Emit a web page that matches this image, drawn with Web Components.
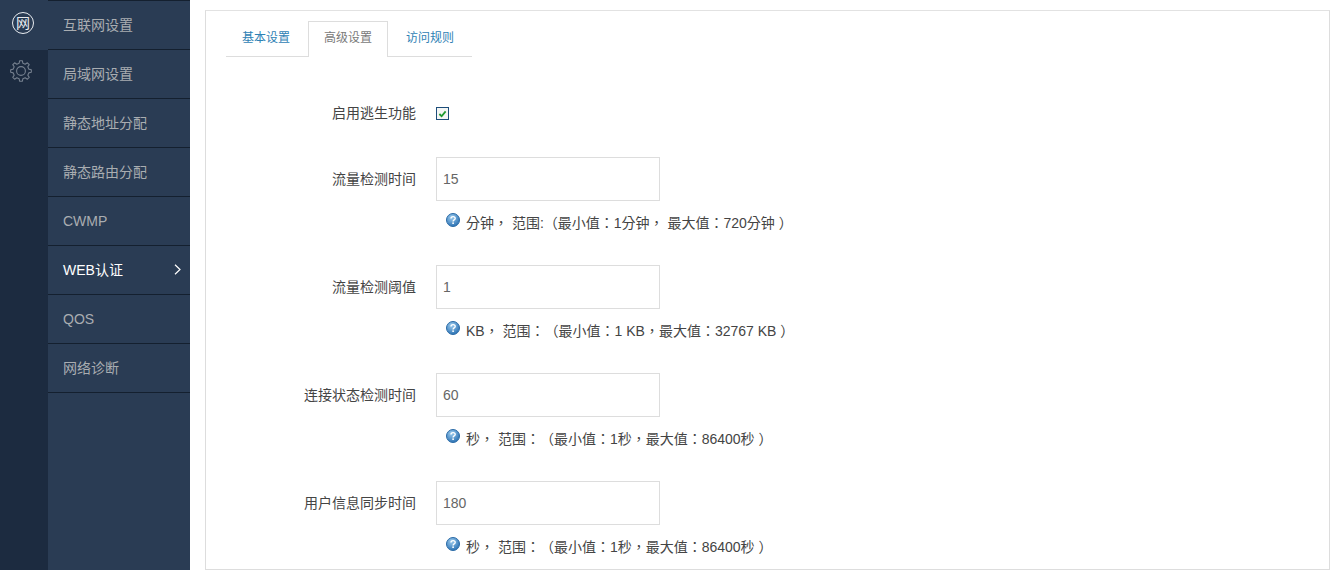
<!DOCTYPE html>
<html>
<head>
<meta charset="utf-8">
<title>高级设置</title>
<style>
  html, body { margin: 0; height: 100%; overflow: hidden; background: #fff; }
  body { font: 14px "Liberation Sans", "Noto Sans CJK SC", sans-serif; color: #444; text-spacing-trim: space-all; }
</style>
</head>
<body>
<app-shell>
  <icon-rail slot="rail"></icon-rail>
  <side-menu slot="menu">
    <menu-item>互联网设置</menu-item>
    <menu-item>局域网设置</menu-item>
    <menu-item>静态地址分配</menu-item>
    <menu-item>静态路由分配</menu-item>
    <menu-item latin>CWMP</menu-item>
    <menu-item active>WEB认证</menu-item>
    <menu-item latin>QOS</menu-item>
    <menu-item>网络诊断</menu-item>
  </side-menu>
  <settings-panel>
    <tab-bar>
      <tab-item>基本设置</tab-item>
      <tab-item active>高级设置</tab-item>
      <tab-item>访问规则</tab-item>
    </tab-bar>
    <check-row label="启用逃生功能"></check-row>
    <field-row label="流量检测时间" value="15">分钟， 范围:（最小值：1分钟， 最大值：720分钟 ）</field-row>
    <field-row label="流量检测阈值" value="1">KB， 范围：（最小值：1 KB，最大值：32767 KB ）</field-row>
    <field-row label="连接状态检测时间" value="60">秒， 范围：（最小值：1秒，最大值：86400秒 ）</field-row>
    <field-row label="用户信息同步时间" value="180">秒， 范围：（最小值：1秒，最大值：86400秒 ）</field-row>
  </settings-panel>
</app-shell>

<script>
// 공통: 섀도 루트에 마크업을 넣는 베이스 클래스
class Base extends HTMLElement {
  constructor(html) {
    super();
    this.attachShadow({ mode: 'open' });
    this.shadowRoot.innerHTML = html;
  }
}

// 톱니 아이콘 외곽선 계산
function gearPath(cx, cy, teeth, outer, inner) {
  const step = Math.PI * 2 / teeth;
  let d = '';
  for (let i = 0; i < teeth; i++) {
    const a = i * step - Math.PI / 2;
    const pts = [[a - step * .30, inner], [a - step * .16, outer], [a + step * .16, outer], [a + step * .30, inner]];
    pts.forEach(([t, r], j) => {
      const x = (cx + Math.cos(t) * r).toFixed(2);
      const y = (cy + Math.sin(t) * r).toFixed(2);
      d += (i === 0 && j === 0 ? 'M' : 'L') + x + ' ' + y;
    });
  }
  return d + 'Z';
}

class AppShell extends Base {
  constructor() {
    super(`
      <style>
        :host { display: flex; height: 570px; }
        .main { flex: 1; min-width: 0; padding: 10px 0 0 15px; box-sizing: border-box; }
      </style>
      <slot name="rail"></slot>
      <slot name="menu"></slot>
      <div class="main"><slot></slot></div>
    `);
  }
}

class IconRail extends Base {
  constructor() {
    super(`
      <style>
        :host { display: block; width: 48px; background: #1c2b40; }
        .cell { height: 50px; display: flex; box-sizing: border-box; }
        .cell.on { background: #2a3c54; padding: 12px 0 0 12px; }
        .cell.gear { padding: 10px 0 0 10px; }
        .logo { width: 22px; height: 22px; border-radius: 50%; border: 1.5px solid #e8ecf0; box-sizing: border-box;
                display: flex; align-items: center; justify-content: center; }
        .logo span { font-size: 14px; line-height: 16px; color: #e8ecf0; }
        svg { display: block; }
      </style>
      <div class="cell on"><div class="logo"><span>网</span></div></div>
      <div class="cell gear">
        <svg width="22" height="22" viewBox="0 0 22 22" fill="none" stroke="#76818f" stroke-width="1.1" stroke-linejoin="round">
          <circle cx="11" cy="11" r="4.4"/>
          <path d="${gearPath(11, 11, 8, 10.4, 8)}"/>
        </svg>
      </div>
    `);
  }
}

class SideMenu extends Base {
  constructor() {
    super(`
      <style>
        :host { display: block; width: 142px; background: #2a3c54; border-top: 1px solid #14202f; box-sizing: border-box; }
      </style>
      <slot></slot>
    `);
  }
}

class MenuItem extends Base {
  constructor() {
    super(`
      <style>
        :host { display: flex; align-items: center; justify-content: space-between; height: 49px; box-sizing: border-box;
                padding: 0 9px 2px 15px; border-bottom: 1px solid #14202f; color: #a9adb1; font-size: 14px; }
        :host([latin]) { padding-bottom: 0; }
        :host([active]) { color: #fff; }
        svg { display: none; }
        :host([active]) svg { display: block; }
      </style>
      <span><slot></slot></span>
      <svg width="7" height="11" viewBox="0 0 7 11" fill="none" stroke="#fff" stroke-width="1.2"><path d="M1 .8l5 4.7-5 4.7"/></svg>
    `);
  }
}

class SettingsPanel extends Base {
  constructor() {
    super(`
      <style>
        :host { display: block; height: 560px; box-sizing: border-box; border: 1px solid #ddd; border-top-color: #e2e2e2;
                padding: 10px 20px 0; overflow: hidden; }
      </style>
      <slot></slot>
    `);
  }
}

class TabBar extends Base {
  constructor() {
    super(`
      <style>
        :host { display: flex; gap: 2px; width: 246px; height: 36px; box-sizing: border-box; border-bottom: 1px solid #ddd; }
      </style>
      <slot></slot>
    `);
  }
}

class TabItem extends Base {
  constructor() {
    super(`
      <style>
        :host { display: block; height: 36px; box-sizing: border-box; padding: 0 15px; border: 1px solid transparent;
                border-bottom: 0; font-size: 12px; line-height: 32px; color: #2f82b5; }
        :host([active]) { color: #7a7a7a; background: #fff; border-color: #ddd; }
      </style>
      <slot></slot>
    `);
  }
}

class CheckRow extends Base {
  constructor() {
    super(`
      <style>
        :host { display: flex; align-items: flex-start; margin-top: 46px; height: 20px; margin-bottom: 34px; color: #444; }
        .label { width: 190px; text-align: right; margin-right: 20px; line-height: 20px; }
        .box { width: 13px; height: 13px; margin-top: 4px; box-sizing: border-box; border: 1px solid #1d4d7a; background: #f4f6f4;
               display: flex; align-items: center; justify-content: center; }
      </style>
      <div class="label"></div>
      <div class="box"><svg width="9" height="8" viewBox="0 0 10 9" fill="none" stroke="#1f9a2e" stroke-width="2"><path d="M1.5 4.5l2.5 2.5 4.5-5.5"/></svg></div>
    `);
  }
  connectedCallback() {
    this.shadowRoot.querySelector('.label').textContent = this.getAttribute('label');
  }
}

class FieldRow extends Base {
  constructor() {
    super(`
      <style>
        :host { display: grid; grid-template-columns: 190px auto; column-gap: 20px; justify-content: start; height: 108px; align-content: start; }
        .label { text-align: right; line-height: 44px; color: #444; }
        input { display: block; width: 224px; height: 44px; box-sizing: border-box; border: 1px solid #ddd; padding: 0 6px;
                font: 14px "Liberation Sans", "Noto Sans CJK SC", sans-serif; color: #666; outline: 0; background: #fff; }
        .hint { grid-column: 2; display: flex; align-items: flex-start; margin: 12px 0 0 10px; line-height: 20px; color: #444; white-space: nowrap;
                font-family: "Liberation Sans", "Noto Sans CJK TC", sans-serif; text-spacing-trim: space-all; }
        .q { width: 14px; height: 14px; margin-right: 6px; flex: none; }
      </style>
      <div class="label"></div>
      <input type="text">
      <div class="hint">
        <svg class="q" viewBox="0 0 14 14">
          <defs><radialGradient id="g" cx=".4" cy=".3" r=".8"><stop offset="0" stop-color="#9ccbee"/><stop offset="1" stop-color="#1f68ad"/></radialGradient></defs>
          <circle cx="7" cy="7" r="6.5" fill="url(#g)" stroke="#2a6aa6"/>
          <path d="M5 5.4c0-2.4 4.2-2.4 4.2 0 0 1.5-2.1 1.5-2.1 3" fill="none" stroke="#fff" stroke-width="1.4"/>
          <rect x="6.3" y="9.4" width="1.6" height="1.6" fill="#fff"/>
        </svg>
        <span><slot></slot></span>
      </div>
    `);
  }
  connectedCallback() {
    this.shadowRoot.querySelector('.label').textContent = this.getAttribute('label');
    this.shadowRoot.querySelector('input').value = this.getAttribute('value');
  }
}

customElements.define('app-shell', AppShell);
customElements.define('icon-rail', IconRail);
customElements.define('side-menu', SideMenu);
customElements.define('menu-item', MenuItem);
customElements.define('settings-panel', SettingsPanel);
customElements.define('tab-bar', TabBar);
customElements.define('tab-item', TabItem);
customElements.define('check-row', CheckRow);
customElements.define('field-row', FieldRow);
</script>
</body>
</html>
